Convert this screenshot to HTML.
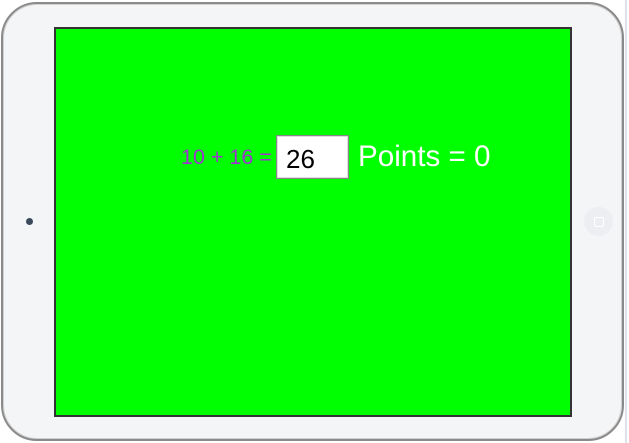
<!DOCTYPE html>
<html><head><style>
html,body{margin:0;padding:0;width:629px;height:443px;background:#fff;overflow:hidden;font-family:"Liberation Sans",Arial,sans-serif}
.frame{position:absolute;left:1px;top:2px;width:619px;height:435px;border:2px solid #8a8a8a;border-radius:36px;background:#f4f5f7;box-shadow:inset 0 0 0 1px #d0d0d0}
.edge{position:absolute;left:625px;top:0;width:2px;height:443px;background:#dde3ea}
.screen{position:absolute;left:54px;top:27px;width:514px;height:386px;border:2px solid #333;background:#00ff00}
.cam{position:absolute;left:26px;top:218px;width:7px;height:7px;border-radius:50%;background:#3a4a5a}
.home{position:absolute;left:584px;top:207px;width:29px;height:29px;border-radius:50%;background:#eceef1}
.home div{position:absolute;left:10px;top:10px;width:8px;height:8px;border:1px solid #fff;border-radius:2px}
.q{position:absolute;left:181px;top:145px;font-size:21.5px;color:#a033d0;white-space:nowrap}
.inp{position:absolute;left:276px;top:135px;width:71px;height:42px;border:1px solid #888;background:#fff;box-shadow:inset 0 0 0 1px #ddd}
.inp span{position:absolute;left:9px;top:8px;font-size:26px;color:#000}
.pts{position:absolute;left:358px;top:140px;font-size:29.6px;color:#fff;white-space:nowrap}
</style></head><body>
<div class="edge"></div>
<div class="frame"></div>
<div class="screen"></div>
<div class="cam"></div>
<div class="home"><div></div></div>
<div class="q">10 + 16 =</div>
<div class="inp"><span>26</span></div>
<div class="pts">Points = 0</div>
</body></html>
